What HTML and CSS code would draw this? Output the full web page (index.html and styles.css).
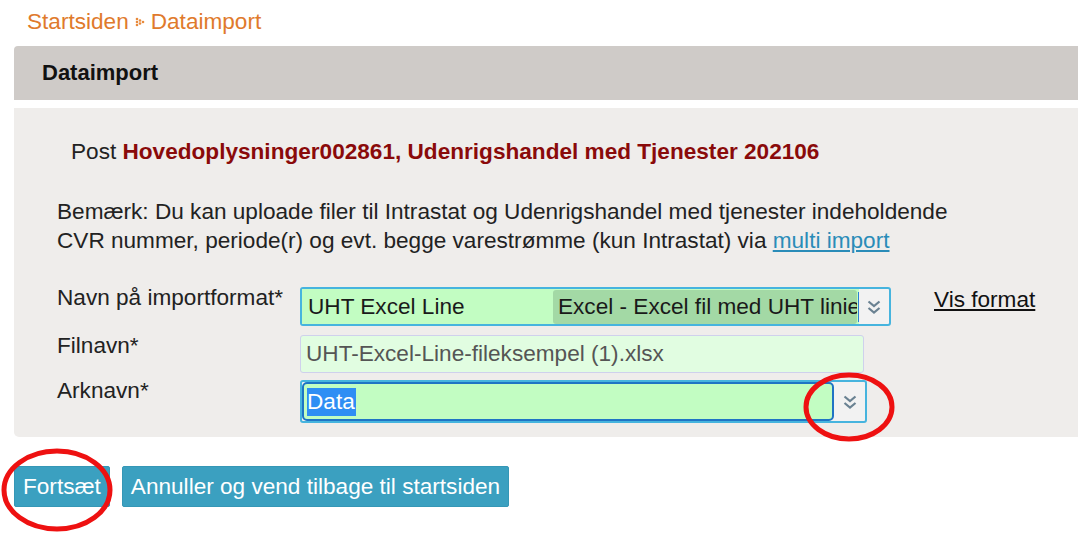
FILE: index.html
```html
<!DOCTYPE html>
<html lang="da">
<head>
<meta charset="utf-8">
<title>Dataimport</title>
<link rel="stylesheet" href="styles.css">
</head>
<body>
<nav class="crumbs">
  <a class="crumb">Startsiden</a>
  <svg class="sep" width="10" height="10" viewBox="0 0 10 10"><circle cx="2" cy="2" r="1.3"/><circle cx="2" cy="5" r="1.3"/><circle cx="2" cy="8" r="1.3"/><circle cx="5" cy="3.5" r="1.3"/><circle cx="5" cy="6.5" r="1.3"/><circle cx="8" cy="5" r="1.3"/></svg>
  <a class="crumb">Dataimport</a>
</nav>
<div class="header">Dataimport</div>
<div class="panel">
  <p class="post">Post <b>Hovedoplysninger002861, Udenrigshandel med Tjenester 202106</b></p>
  <p class="note">Bemærk: Du kan uploade filer til Intrastat og Udenrigshandel med tjenester indeholdende<br>CVR nummer, periode(r) og evt. begge varestrømme (kun Intrastat) via <a class="link">multi import</a></p>
  <div class="form">
    <div class="row">
      <label class="lbl">Navn på importformat*</label>
      <div class="select s1">
        <div class="field">
          <span class="val">UHT Excel Line</span>
          <span class="opt">Excel - Excel fil med UHT linie</span>
          <span class="caret"></span>
        </div>
        <span class="arrow"><svg width="16" height="16" viewBox="0 0 16 16"><path d="M2.5 2.5 L8 7 L13.5 2.5 M2.5 9 L8 13.5 L13.5 9" fill="none" stroke="#6a8292" stroke-width="2.2"/></svg></span>
      </div>
      <a class="vis">Vis format</a>
    </div>
    <div class="row">
      <label class="lbl">Filnavn*</label>
      <div class="file">UHT-Excel-Line-fileksempel (1).xlsx</div>
    </div>
    <div class="row">
      <label class="lbl">Arknavn*</label>
      <div class="select s2">
        <div class="field focus"><span class="sel">Data</span></div>
        <span class="arrow"><svg width="16" height="16" viewBox="0 0 16 16"><path d="M2.5 2.5 L8 7 L13.5 2.5 M2.5 9 L8 13.5 L13.5 9" fill="none" stroke="#6a8292" stroke-width="2.2"/></svg></span>
      </div>
    </div>
  </div>
</div>
<div class="buttons">
  <button class="btn">Fortsæt</button>
  <button class="btn">Annuller og vend tilbage til startsiden</button>
</div>
<svg class="ring ring1" width="96" height="76" viewBox="0 0 96 76"><ellipse cx="48" cy="38" rx="43" ry="32" fill="none" stroke="#ee1111" stroke-width="5"/></svg>
<svg class="ring ring2" width="116" height="88" viewBox="0 0 116 88"><ellipse cx="58" cy="44" rx="53" ry="39" fill="none" stroke="#ee1111" stroke-width="5"/></svg>
</body>
</html>
```
FILE: styles.css
```css
html, body {
  margin: 0;
  padding: 0;
  background: #ffffff;
  font-family: "Liberation Sans", Arial, sans-serif;
  font-size: 22.6px;
  color: #222222;
  overflow: hidden;
}
body {
  position: relative;
  width: 1078px;
  height: 537px;
}
.crumbs {
  display: flex;
  align-items: center;
  gap: 6px;
  padding: 9px 0 0 27px;
  height: 26px;
  line-height: 26px;
}
.crumb {
  color: #e07a2c;
}
.sep {
  fill: #e88a3c;
}
.header {
  margin: 11px 0 0 14px;
  width: 1080px;
  height: 54px;
  box-sizing: border-box;
  background: #cfcbc8;
  border-radius: 4px 0 0 0;
  padding-left: 28px;
  line-height: 54px;
  font-weight: bold;
  font-size: 22px;
  color: #111111;
}
.panel {
  margin: 8px 0 0 14px;
  width: 1080px;
  height: 329px;
  box-sizing: border-box;
  background: #efedeb;
  border-radius: 0 0 0 5px;
  padding: 30px 0 0 43px;
}
.post {
  margin: 0 0 0 14px;
  line-height: 28px;
}
.post b {
  color: #8a0a0a;
}
.note {
  margin: 31px 0 0 0;
  line-height: 29px;
}
.link {
  color: #2a8cb8;
  text-decoration: underline;
}
.form {
  margin-top: 32px;
  display: flex;
  flex-direction: column;
}
.row {
  display: flex;
  align-items: flex-start;
}
.row + .row {
  margin-top: 9px;
}
.lbl {
  width: 243px;
  line-height: 26px;
  margin-top: -2px;
}
.select {
  display: flex;
  align-items: stretch;
  box-sizing: border-box;
  border: 2px solid #46b4de;
  border-radius: 3px;
  background: #f2f2f2;
}
.s1 {
  width: 591px;
  height: 39px;
  flex: none;
}
.s1 .field {
  flex: 1;
  display: flex;
  align-items: center;
  background: #c2fdc2;
  padding-left: 6px;
  overflow: hidden;
}
.val {
  width: 245px;
  flex: none;
  color: #1a1a1a;
}
.opt {
  flex: none;
  background: #a3d9a5;
  height: 34px;
  line-height: 34px;
  border-radius: 3px;
  padding-left: 5px;
  width: 299px;
  overflow: hidden;
  white-space: nowrap;
  color: #1a1a1a;
}
.caret {
  flex: none;
  width: 1px;
  height: 30px;
  background: #2a7fd4;
  margin-left: 1px;
}
.arrow {
  width: 30px;
  flex: none;
  display: flex;
  align-items: center;
  justify-content: center;
}
.vis {
  margin: 0 0 0 43px;
  line-height: 26px;
  color: #111111;
  text-decoration: underline;
}
.file {
  width: 564px;
  height: 38px;
  box-sizing: border-box;
  background: #e1fde1;
  border: 1px solid #cfd1ec;
  border-radius: 3px;
  padding-left: 5px;
  line-height: 36px;
  color: #555555;
  white-space: nowrap;
}
.row:nth-child(3) {
  margin-top: 7px;
}
.s2 {
  width: 567px;
  height: 43px;
}
.s2 .field {
  flex: 1;
  display: flex;
  align-items: center;
  box-sizing: border-box;
  background: #c2fdc2;
  border: 2px solid #1f74c4;
  border-radius: 5px;
  padding-left: 3px;
}
.sel {
  background: #2f8ef4;
  color: #ffffff;
  line-height: 28px;
  padding-right: 1px;
}
.s2 .arrow {
  width: 31px;
}
.buttons {
  display: flex;
  gap: 12px;
  margin: 29px 0 0 14px;
}
.btn {
  font-family: "Liberation Sans", Arial, sans-serif;
  font-size: 22.6px;
  height: 41px;
  padding: 0 8px;
  border: 1px solid #3597b6;
  background: #3ba0c0;
  color: #ffffff;
  border-radius: 2px;
}
.ring {
  position: absolute;
}
.ring1 {
  left: 801px;
  top: 369px;
}
.ring2 {
  left: -1px;
  top: 446px;
}
```
